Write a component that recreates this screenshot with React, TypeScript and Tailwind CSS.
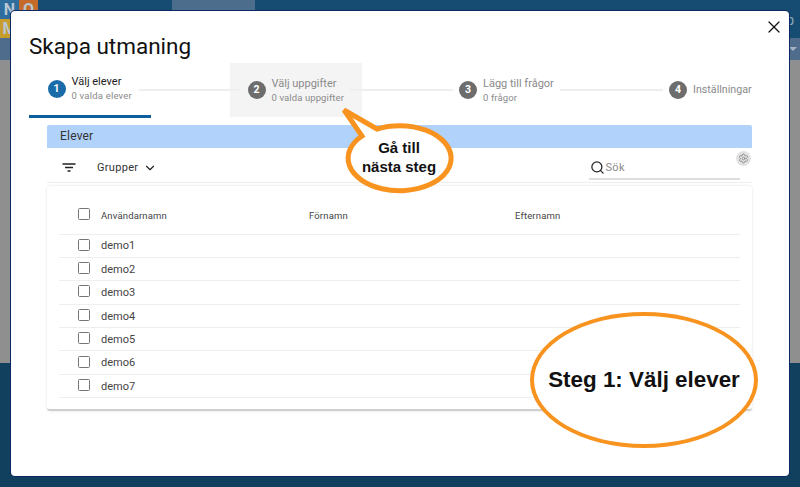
import { Search, X, ChevronDown, Settings } from 'lucide-react';

const rows = ['demo1', 'demo2', 'demo3', 'demo4', 'demo5', 'demo6', 'demo7'];

function StepCircle({ n, active }: { n: number; active?: boolean }) {
  return (
    <span
      className={`flex h-[18px] w-[18px] shrink-0 items-center justify-center rounded-full text-[10.5px] font-bold text-white ${
        active ? 'bg-[#1a6ca8]' : 'bg-[#6d6d6d]'
      }`}
    >
      {n}
    </span>
  );
}

function Checkbox() {
  return <span className="block h-[12px] w-[12px] -mt-[2px] rounded-[1.5px] border-[1.5px] border-[#757575]" />;
}

function Line({ className }: { className: string }) {
  return <span className={`relative z-10 h-[1.5px] shrink-0 bg-[#eeeeee] ${className}`} />;
}

export default function App() {
  return (
    <div className="relative h-[487px] w-[800px] overflow-hidden font-['Roboto',sans-serif]">
      {/* Page behind the dialog */}
      <div className="flex h-full flex-col">
        <div className="flex h-[38px] bg-[#164c72]">
          <div className="grid w-[38px] grid-cols-2 text-[16px] font-bold leading-[19px] text-[#b9c6d2]">
            <span className="h-[19px] bg-[#2f6d9e] text-center">N</span>
            <span className="h-[19px] bg-[#c46a2b] text-center">O</span>
            <span className="h-[19px] bg-[#c69c2c] text-center">M</span>
            <span className="h-[19px] bg-[#c69c2c]" />
          </div>
          <div className="ml-[134px] h-full w-[83px] bg-[#4d6d8d]" />
          <span className="ml-auto mt-[10px] pr-[6px] text-[14px] text-[#8ea6b8]">p</span>
        </div>
        <div className="flex h-[22px] items-center justify-end bg-[#4f6c8c] pr-[3px]">
          <span className="h-0 w-0 border-x-[4px] border-t-[4px] border-x-transparent border-t-[#a5b3c2]" />
        </div>
        <div className="h-[303px] bg-[#8f8f8f]" />
        <div className="flex-1 bg-[#11405f]" />
      </div>

      {/* Dialog */}
      <div className="absolute left-[11px] top-[11px] flex h-[465px] w-[778px] flex-col rounded-[4px] bg-white shadow-[0_-1px_0_#0b2a63,-1px_0_0_#0b2a63,0_1px_0_#0b2a63,1px_0_0_#0b2a63]">
        <button className="absolute right-[5.5px] top-[6px] text-[#111]">
          <X size={20} strokeWidth={1.5} />
        </button>
        <h1 className="ml-[18px] mt-[20px] text-[22.5px] leading-[30px] text-[#111]">Skapa utmaning</h1>

        {/* Stepper */}
        <div className="ml-[18px] mt-[2px] flex h-[55px] w-[723px] items-start">
          <div className="flex h-[55px] w-[122px] shrink-0 items-center border-b-[3px] border-[#0b5f9e] pl-[18.5px]">
            <StepCircle n={1} active />
            <div className="ml-[6px] -mt-[1px]">
              <div className="whitespace-nowrap text-[11px] leading-[14px] text-[#222]">Välj elever</div>
              <div className="whitespace-nowrap text-[9.5px] leading-[13px] tracking-[0.2px] text-[#8a8a8a]">0 valda elever</div>
            </div>
          </div>
          <div className="flex h-[54px] flex-1 items-center">
            <Line className="ml-[-12px] w-[102px]" />
            <div className="ml-[-11px] flex h-[54px] w-[132px] shrink-0 items-center bg-[#f4f4f4] pl-[17.5px]">
              <StepCircle n={2} />
              <div className="ml-[6px] mt-[1px]">
                <div className="whitespace-nowrap text-[11px] leading-[14px] text-[#8a8a8a]">Välj uppgifter</div>
                <div className="whitespace-nowrap text-[9.5px] leading-[13px] tracking-[0.1px] text-[#8a8a8a]">0 valda uppgifter</div>
              </div>
            </div>
            <Line className="ml-[-12px] w-[103px]" />
            <span className="ml-[6px]"><StepCircle n={3} /></span>
            <div className="ml-[6px] mt-[1px] w-[71px] shrink-0">
              <div className="whitespace-nowrap text-[11px] leading-[14px] text-[#8a8a8a]">Lägg till frågor</div>
              <div className="whitespace-nowrap text-[9.5px] leading-[13px] tracking-[0.1px] text-[#8a8a8a]">0 frågor</div>
            </div>
            <Line className="ml-[6px] w-[103px]" />
            <span className="ml-[6px]"><StepCircle n={4} /></span>
            <span className="ml-[6px] whitespace-nowrap text-[10.7px] text-[#8a8a8a]">Inställningar</span>
          </div>
        </div>

        {/* Student panel */}
        <div className="ml-[36px] mt-[6.5px] w-[705px]">
          <div className="flex h-[23.5px] items-center rounded-t-[2px] bg-[#b0d2fb] pl-[13px] text-[12px] tracking-[0.2px] text-[#333]">
            Elever
          </div>
          <div className="relative flex h-[34.5px] items-center border-b border-[#eeeeee] pt-[5px]">
            <svg className="ml-[15px]" width="14" height="9" viewBox="0 0 14 9" fill="none" stroke="#222" strokeWidth="1.3">
              <path d="M0.5 1h13M3 4.5h8M5.5 8h3" />
            </svg>
            <span className="ml-[21px] mt-[1px] text-[11px] tracking-[0.3px] text-[#333]">Grupper</span>
            <ChevronDown size={14} strokeWidth={2} className="ml-[5px] mt-[1px] text-[#222]" />
            <div className="ml-auto mr-[12px] mt-[3px] flex h-[22px] w-[151px] items-center border-b-2 border-[#dddddd] pl-[1px]">
              <Search size={15} strokeWidth={2} className="-mt-[1px] text-[#222]" />
              <span className="ml-[0.5px] mt-[1px] text-[11px] tracking-[0.3px] text-[#8a8a8a]">Sök</span>
            </div>
            <span className="absolute right-[1px] top-[2.5px] flex h-[15px] w-[15px] items-center justify-center rounded-full bg-[#e2e2e2]">
              <Settings size={11} strokeWidth={1.5} className="text-[#777]" />
            </span>
          </div>

          <div className="mt-[3px] rounded-[3px] border-b-2 border-[#cfcfcf] px-[12px] pb-[11px] shadow-[0_0_3px_rgba(0,0,0,0.12)]">
            <div className="grid h-[49px] grid-cols-[250px_206px_1fr] items-center border-b border-[#eeeeee] pt-[14px] text-[9.5px] tracking-[0.15px] text-[#444]">
              <div className="flex items-center pl-[19px]">
                <span className="-mt-[3px]"><Checkbox /></span>
                <span className="ml-[11px]">Användarnamn</span>
              </div>
              <span>Förnamn</span>
              <span>Efternamn</span>
            </div>
            {rows.map((name) => (
              <div key={name} className="flex h-[23.4px] items-center border-b border-[#eeeeee] pl-[19px]">
                <Checkbox />
                <span className="ml-[11px] mt-[2px] text-[11px] text-[#444]">{name}</span>
              </div>
            ))}
          </div>
        </div>
      </div>

      {/* Annotation: next step */}
      <svg className="absolute left-[330px] top-[100px]" width="140" height="100" viewBox="0 0 140 100" fill="none">
        <path
          d="M14 10 L47 29 A51.5 32.5 0 1 1 32 36 Z"
          fill="#fff"
          stroke="#f7931e"
          strokeWidth="5"
        />
      </svg>
      <div className="absolute left-[349px] top-[138px] w-[100px] text-center font-['Liberation_Sans',sans-serif] text-[15px] font-bold leading-[19px] text-[#111]">
        Gå till
        <br />
        nästa steg
      </div>

      {/* Annotation: current step */}
      <div className="absolute left-[530px] top-[312px] flex h-[136px] w-[228px] items-center justify-center rounded-[50%] border-[4.5px] border-[#f7931e] bg-white font-['Liberation_Sans',sans-serif] text-[22.4px] font-bold text-[#111]">
        Steg 1: Välj elever
      </div>
    </div>
  );
}
